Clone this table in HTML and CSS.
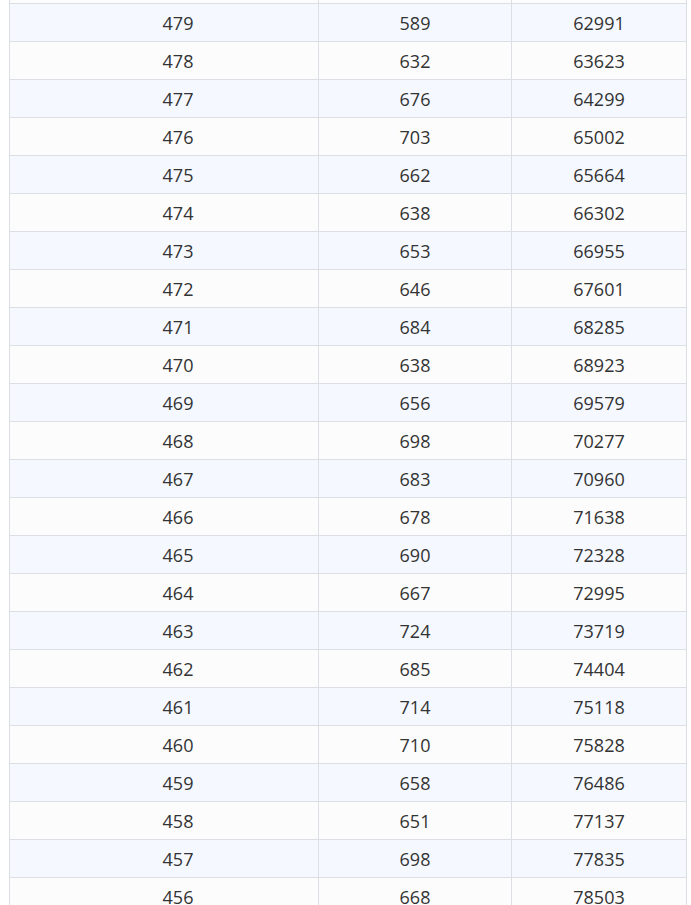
FILE: index.html
```html
<!DOCTYPE html>
<html>
<head>
<meta charset="utf-8">
<link rel="stylesheet" href="styles.css">
</head>
<body>
<div class="viewport">
<table class="scores">
<tbody>
<tr><td class="c1"></td><td></td><td></td></tr>
<tr><td class="c1">479</td><td>589</td><td>62991</td></tr>
<tr><td class="c1">478</td><td>632</td><td>63623</td></tr>
<tr><td class="c1">477</td><td>676</td><td>64299</td></tr>
<tr><td class="c1">476</td><td>703</td><td>65002</td></tr>
<tr><td class="c1">475</td><td>662</td><td>65664</td></tr>
<tr><td class="c1">474</td><td>638</td><td>66302</td></tr>
<tr><td class="c1">473</td><td>653</td><td>66955</td></tr>
<tr><td class="c1">472</td><td>646</td><td>67601</td></tr>
<tr><td class="c1">471</td><td>684</td><td>68285</td></tr>
<tr><td class="c1">470</td><td>638</td><td>68923</td></tr>
<tr><td class="c1">469</td><td>656</td><td>69579</td></tr>
<tr><td class="c1">468</td><td>698</td><td>70277</td></tr>
<tr><td class="c1">467</td><td>683</td><td>70960</td></tr>
<tr><td class="c1">466</td><td>678</td><td>71638</td></tr>
<tr><td class="c1">465</td><td>690</td><td>72328</td></tr>
<tr><td class="c1">464</td><td>667</td><td>72995</td></tr>
<tr><td class="c1">463</td><td>724</td><td>73719</td></tr>
<tr><td class="c1">462</td><td>685</td><td>74404</td></tr>
<tr><td class="c1">461</td><td>714</td><td>75118</td></tr>
<tr><td class="c1">460</td><td>710</td><td>75828</td></tr>
<tr><td class="c1">459</td><td>658</td><td>76486</td></tr>
<tr><td class="c1">458</td><td>651</td><td>77137</td></tr>
<tr><td class="c1">457</td><td>698</td><td>77835</td></tr>
<tr><td class="c1">456</td><td>668</td><td>78503</td></tr>
</tbody>
</table>
</div>
</body>
</html>
```
FILE: styles.css
```css
html, body {
  margin: 0;
  padding: 0;
  background: #ffffff;
  overflow: hidden;
}
.viewport {
  padding-left: 9px;
  width: 677px;
}
.scores {
  margin-top: -35px;
  width: 677px;
  border-collapse: collapse;
  table-layout: fixed;
  font-family: "Open Sans", "Noto Sans", sans-serif;
  font-size: 18px;
  color: #333333;
}
.scores td {
  border: 1px solid #dcdfe3;
  height: 38px;
  padding: 0;
  text-align: center;
  vertical-align: middle;
  box-sizing: border-box;
}
.scores tr:nth-child(odd) td { background: #fcfcfc; }
.scores tr:nth-child(even) td { background: #f5f9ff; }
.scores td.c1 { width: 309px; padding-left: 28px; }
.scores td:nth-child(2) { width: 193px; }
.scores td:nth-child(3) { width: 175px; }
```
